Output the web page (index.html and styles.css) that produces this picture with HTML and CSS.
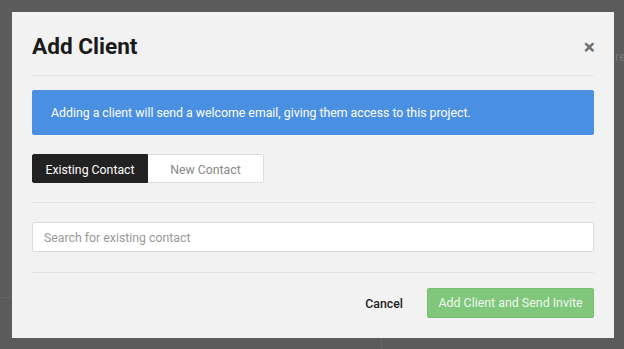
FILE: index.html
```html
<!DOCTYPE html>
<html lang="en">
<head>
    <meta charset="UTF-8">
    <title>Add Client</title>
    <link rel="stylesheet" href="styles.css">
</head>
<body>
    <div class="page">
        <span class="page-text">re</span>
    </div>
    <div class="modal">
        <div class="modal-header">
            <h2 class="modal-title">Add Client</h2>
            <a href="javascript:;" class="close">&times;</a>
        </div>
        <div class="alert">Adding a client will send a welcome email, giving them access to this project.</div>
        <div class="tabs">
            <span class="tab on">Existing Contact</span>
            <span class="tab">New Contact</span>
        </div>
        <div class="search">
            <input type="text" class="search-input" placeholder="Search for existing contact">
        </div>
        <div class="modal-footer">
            <a href="javascript:;" class="cancel">Cancel</a>
            <a href="javascript:;" class="btn-invite">Add Client and Send Invite</a>
        </div>
    </div>
</body>
</html>
```

FILE: styles.css
```css
*{
    margin: 0; padding: 0; box-sizing: border-box; text-decoration: none;
}
body {
    background: #5b5b5b; font-family: Roboto, "Liberation Sans", sans-serif; overflow: hidden; height: 349px;
}
.page {
    height: 349px; position: relative;
}
.page-text {
    position: absolute; left: 615px; top: 49px; font-size: 13px; color: #777;
}
.page::before {
    content: ""; position: absolute; left: 0; top: 297px; width: 12px; height: 1px; background: #646464;
}
.page::after {
    content: ""; position: absolute; left: 381px; top: 338px; width: 1px; height: 11px; background: #666;
}
.modal {
    position: absolute; left: 12px; top: 12px; width: 602px; height: 326px; background: #f2f2f2; padding: 0 20px 20px;
}
.modal-header {
    display: flex; justify-content: space-between; align-items: center; padding: 22px 0 16px; border-bottom: 1px solid #e2e2e2;
}
.modal-title {
    font-size: 22.6px; line-height: 25px; font-weight: 700; color: #1a1a1a;
}
.close {
    font-size: 21px; line-height: 20px; color: #707070; font-weight: 700; margin-right: -1px;
}
.alert {
    margin-top: 14px; background: #4a90e2; color: #fff; font-size: 12.3px; line-height: 19px; padding: 14px 19px 12px; border-radius: 2px;
}
.tabs {
    display: flex; margin-top: 19px; padding-bottom: 19px; border-bottom: 1px solid #e2e2e2;
}
.tab {
    width: 116px; height: 29px; line-height: 23px; padding-top: 4px; text-align: center; font-size: 12.3px; color: #888; background: #fff; border: 1px solid #dcdcdc; border-left: none; border-radius: 0 2px 2px 0;
}
.tab.on {
    background: #222; color: #fff; border: 1px solid #222; border-radius: 2px 0 0 2px;
}
.search {
    padding: 19px 0 20px; border-bottom: 1px solid #e2e2e2;
}
.search-input {
    display: block; width: 100%; height: 30px; border: 1px solid #dcdcdc; border-radius: 2px; background: #fff; padding: 2px 11px 0; font-family: inherit; font-size: 12.3px; color: #333; outline: none;
}
.search-input::placeholder {
    color: #999;
}
.modal-footer {
    display: flex; justify-content: flex-end; align-items: center; gap: 24px; padding-top: 15px;
}
.cancel {
    font-size: 12.3px; font-weight: 500; color: #222; padding-top: 2px;
}
.btn-invite {
    display: block; width: 167px; height: 30px; line-height: 28px; text-align: center; font-size: 12.4px; color: #eef8ee; background: #80c77c; border: 1px solid #77bf73; border-radius: 2px;
}
```
